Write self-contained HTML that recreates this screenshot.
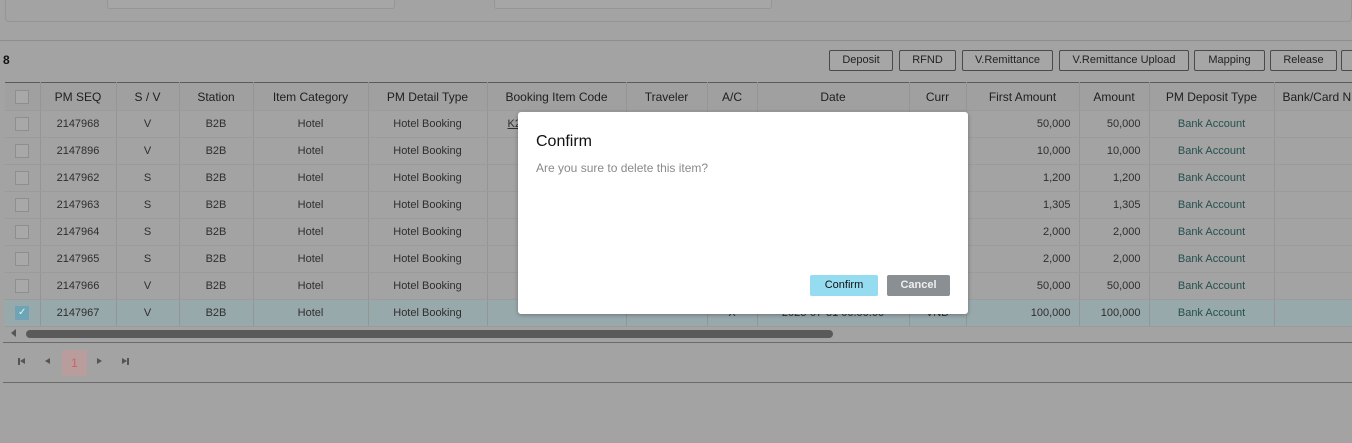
<!DOCTYPE html>
<html><head><style>
*{box-sizing:border-box;margin:0;padding:0}
body{width:1352px;height:443px;background:#a3a3a3;font-family:"Liberation Sans",sans-serif;font-size:11px;color:#333;position:relative;overflow:hidden}
.abs{position:absolute}
.inp{position:absolute;border:1px solid #959595;border-top:none;background:#a6a6a6;border-radius:0 0 3px 3px}
.btn{position:absolute;top:50px;height:21px;border:1px solid #4a4a4a;border-radius:2px;background:#a6a6a6;font-size:11px;line-height:19px;text-align:center;color:#222}
table{position:absolute;left:5px;top:82px;width:1359px;border-collapse:collapse;table-layout:fixed}
td,th{height:27px;border-right:1px solid #959595;border-bottom:1px solid #9b9b9b;text-align:center;white-space:nowrap;overflow:hidden}
th{font-weight:normal;font-size:12px;color:#1e1e1e;background:#a0a0a0;height:28px;border-top:1px solid #5a5a5a}
td{color:#2e2e2e}
td.r{text-align:right;padding-right:8px}
td.t{color:#24504e}
.cb{display:inline-block;width:14px;height:14px;border:1px solid #8e8e8e;background:#a8a8a8;vertical-align:middle}
tr.sel td{background:#98a9ac}
</style></head><body>
<div class="abs" style="left:5px;top:0;width:1347px;height:22px;border:1px solid #959595;border-top:none;border-radius:0 0 4px 4px"></div>
<div class="inp" style="left:107px;top:0;width:288px;height:9px"></div>
<div class="inp" style="left:494px;top:0;width:278px;height:9px"></div>
<div class="abs" style="left:0;top:40px;width:1352px;height:1px;background:#8e8e8e"></div>
<div class="abs" style="left:3px;top:53px;font-size:12px;font-weight:bold;color:#111">8</div>
<div class="btn" style="left:829px;width:64px">Deposit</div>
<div class="btn" style="left:899px;width:57px">RFND</div>
<div class="btn" style="left:962px;width:91px">V.Remittance</div>
<div class="btn" style="left:1059px;width:130px">V.Remittance Upload</div>
<div class="btn" style="left:1194px;width:71px">Mapping</div>
<div class="btn" style="left:1270px;width:67px">Release</div>
<div class="btn" style="left:1341px;width:30px"></div>
<table>
<colgroup><col style="width:35px"><col style="width:76px"><col style="width:63px"><col style="width:74px"><col style="width:115px"><col style="width:119px"><col style="width:139px"><col style="width:81px"><col style="width:50px"><col style="width:152px"><col style="width:57px"><col style="width:113px"><col style="width:70px"><col style="width:125px"><col style="width:90px"></colgroup>
<tr><th><span class="cb"></span></th><th>PM SEQ</th><th>S / V</th><th>Station</th><th>Item Category</th><th>PM Detail Type</th><th>Booking Item Code</th><th>Traveler</th><th>A/C</th><th>Date</th><th>Curr</th><th>First Amount</th><th>Amount</th><th>PM Deposit Type</th><th style="text-align:left;padding-left:8px">Bank/Card N</th></tr>
<tr><td><span class="cb"></span></td><td>2147968</td><td>V</td><td>B2B</td><td>Hotel</td><td>Hotel Booking</td><td style="text-align:left;padding-left:20px;text-decoration:underline">K2</td><td></td><td></td><td></td><td></td><td class="r">50,000</td><td class="r">50,000</td><td class="t">Bank Account</td><td></td></tr>
<tr><td><span class="cb"></span></td><td>2147896</td><td>V</td><td>B2B</td><td>Hotel</td><td>Hotel Booking</td><td></td><td></td><td></td><td></td><td></td><td class="r">10,000</td><td class="r">10,000</td><td class="t">Bank Account</td><td></td></tr>
<tr><td><span class="cb"></span></td><td>2147962</td><td>S</td><td>B2B</td><td>Hotel</td><td>Hotel Booking</td><td></td><td></td><td></td><td></td><td></td><td class="r">1,200</td><td class="r">1,200</td><td class="t">Bank Account</td><td></td></tr>
<tr><td><span class="cb"></span></td><td>2147963</td><td>S</td><td>B2B</td><td>Hotel</td><td>Hotel Booking</td><td></td><td></td><td></td><td></td><td></td><td class="r">1,305</td><td class="r">1,305</td><td class="t">Bank Account</td><td></td></tr>
<tr><td><span class="cb"></span></td><td>2147964</td><td>S</td><td>B2B</td><td>Hotel</td><td>Hotel Booking</td><td></td><td></td><td></td><td></td><td></td><td class="r">2,000</td><td class="r">2,000</td><td class="t">Bank Account</td><td></td></tr>
<tr><td><span class="cb"></span></td><td>2147965</td><td>S</td><td>B2B</td><td>Hotel</td><td>Hotel Booking</td><td></td><td></td><td></td><td></td><td></td><td class="r">2,000</td><td class="r">2,000</td><td class="t">Bank Account</td><td></td></tr>
<tr><td><span class="cb"></span></td><td>2147966</td><td>V</td><td>B2B</td><td>Hotel</td><td>Hotel Booking</td><td></td><td></td><td></td><td></td><td></td><td class="r">50,000</td><td class="r">50,000</td><td class="t">Bank Account</td><td></td></tr>
<tr class="sel"><td><span class="cb" style="background:#6fa3b6;border-color:#6fa3b6;color:#cfe;font-size:10px;line-height:12px">✓</span></td><td>2147967</td><td>V</td><td>B2B</td><td>Hotel</td><td>Hotel Booking</td><td></td><td></td><td>X</td><td>2023-07-31 00:00:00</td><td>VND</td><td class="r">100,000</td><td class="r">100,000</td><td class="t">Bank Account</td><td></td></tr>
</table>
<div class="abs" style="left:11px;top:329px;width:0;height:0;border-top:4px solid transparent;border-bottom:4px solid transparent;border-right:5px solid #555"></div>
<div class="abs" style="left:26px;top:330px;width:807px;height:8px;background:#5a5a5a;border-radius:4px"></div>
<div class="abs" style="left:3px;top:342px;width:1349px;height:1px;background:#6a6a6a"></div>
<div class="abs" style="left:3px;top:382px;width:1349px;height:1px;background:#6a6a6a"></div>
<div class="abs" style="left:18px;top:358px;width:2px;height:7px;background:#555"></div>
<div class="abs" style="left:20px;top:358px;border-top:3.5px solid transparent;border-bottom:3.5px solid transparent;border-right:5px solid #555"></div>
<div class="abs" style="left:45px;top:358px;border-top:3.5px solid transparent;border-bottom:3.5px solid transparent;border-right:5px solid #555"></div>
<div class="abs" style="left:62px;top:350px;width:25px;height:26px;background:#b99c9c;color:#c86464;font-size:12px;text-align:center;line-height:26px">1</div>
<div class="abs" style="left:97px;top:358px;border-top:3.5px solid transparent;border-bottom:3.5px solid transparent;border-left:5px solid #555"></div>
<div class="abs" style="left:122px;top:358px;border-top:3.5px solid transparent;border-bottom:3.5px solid transparent;border-left:5px solid #555"></div>
<div class="abs" style="left:127px;top:358px;width:2px;height:7px;background:#555"></div>
<div class="abs" style="left:518px;top:112px;width:450px;height:202px;background:#fff;border-radius:3px;box-shadow:0 1px 4px rgba(0,0,0,.3)">
<div class="abs" style="left:18px;top:21px;font-size:16px;color:#111">Confirm</div>
<div class="abs" style="left:18px;top:49px;font-size:12px;color:#8a8a8a">Are you sure to delete this item?</div>
<div class="abs" style="left:292px;top:163px;width:68px;height:21px;background:#95dcf0;border-radius:2px;font-size:11px;color:#111;text-align:center;line-height:21px">Confirm</div>
<div class="abs" style="left:369px;top:163px;width:63px;height:21px;background:#8a8f94;border-radius:2px;font-size:11px;font-weight:bold;color:#eee;text-align:center;line-height:21px">Cancel</div>
</div>
</body></html>
